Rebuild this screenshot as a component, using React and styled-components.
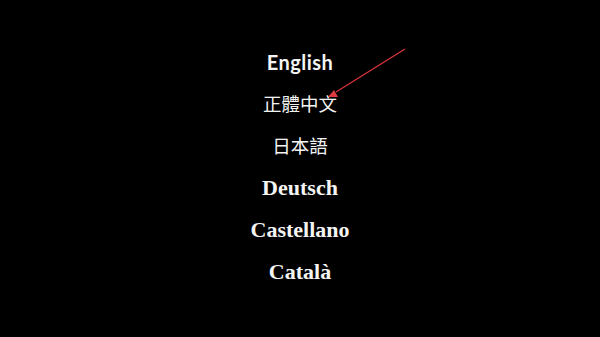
import React from 'react';
import styled, { createGlobalStyle } from 'styled-components';

const GlobalStyle = createGlobalStyle`
  html, body {
    margin: 0;
    padding: 0;
    background: #000;
  }
`;

const languages = [
  { id: 'en', label: 'English', kind: 'sans' },
  { id: 'zh', label: '正體中文', kind: 'cjk' },
  { id: 'ja', label: '日本語', kind: 'cjk' },
  { id: 'de', label: 'Deutsch', kind: 'serif' },
  { id: 'es', label: 'Castellano', kind: 'serif' },
  { id: 'ca', label: 'Català', kind: 'serif' },
];

const fonts = {
  sans: 'Lato, "Open Sans", sans-serif',
  cjk: '"Noto Sans CJK TC", "Noto Sans CJK JP", sans-serif',
  serif: '"Liberation Serif", "DejaVu Serif", serif',
};

const sizes = { sans: '20px', cjk: '18.5px', serif: '22px' };

const App = () => {
  return (
    <Screen>
      <GlobalStyle />
      <LangList>
        {languages.map(lang => (
          <LangItem key={lang.id} kind={lang.kind}>
            {lang.label}
          </LangItem>
        ))}
      </LangList>
      {/* 화살표 */}
      <Arrow width="600" height="337" viewBox="0 0 600 337">
        <line x1="405" y1="49" x2="336" y2="92" stroke="#d9343c" strokeWidth="1.3" />
        <polygon points="328,97 338,97 334,90" fill="#e03a3e" />
      </Arrow>
    </Screen>
  );
};

const Screen = styled.div`
  position: relative;
  width: 600px;
  height: 337px;
  background-color: #000;
  overflow: hidden;
`;

const LangList = styled.ul`
  list-style: none;
  margin: 0;
  padding: 41px 0 0;
  display: flex;
  flex-direction: column;
  align-items: center;
`;

const LangItem = styled.li`
  height: 42px;
  box-sizing: border-box;
  padding-bottom: ${({ kind }) => (kind === 'cjk' ? '3px' : '0')};
  display: flex;
  align-items: center;
  color: #f4f4f4;
  font-family: ${({ kind }) => fonts[kind]};
  font-size: ${({ kind }) => sizes[kind]};
  font-weight: ${({ kind }) => (kind === 'cjk' ? 400 : 700)};
  letter-spacing: ${({ kind }) => (kind === 'sans' ? '0.5px' : 'normal')};
`;

const Arrow = styled.svg`
  position: absolute;
  left: 0;
  top: 0;
  pointer-events: none;
`;

export default App;
